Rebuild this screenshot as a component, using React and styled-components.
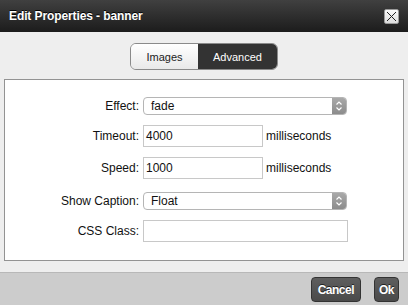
import React from "react";
import styled, { createGlobalStyle } from "styled-components";

const Global = createGlobalStyle`
  html, body { margin: 0; padding: 0; }
  body { font-family: "Liberation Sans", Arial, Helvetica, sans-serif; }
  #root { width: 408px; height: 305px; }
`;

const Dialog = styled.div`
  width: 408px;
  height: 305px;
  display: flex;
  flex-direction: column;
  background: #eeeeee;
  overflow: hidden;
`;

const TitleBar = styled.div`
  height: 32px;
  flex: none;
  display: flex;
  align-items: center;
  justify-content: space-between;
  padding: 0 9px 0 9px;
  background: linear-gradient(#404040, #1c1c1c);
  box-sizing: border-box;
`;

const Title = styled.div`
  color: #ffffff;
  font-size: 12px;
  font-weight: bold;
  letter-spacing: -0.1px;
  text-shadow: 0 -1px 0 #000;
`;

const CloseButton = styled.div`
  width: 15px;
  height: 15px;
  box-sizing: border-box;
  border: 1px solid #9a9a9a;
  border-radius: 2px;
  background: linear-gradient(#fafafa, #dcdcdc);
  display: flex;
  align-items: center;
  justify-content: center;
  margin-top: 0px;
`;

const Body = styled.div`
  flex: 1;
  display: flex;
  flex-direction: column;
  align-items: center;
  padding: 11px 4px 11px 4px;
`;

const Tabs = styled.div`
  display: flex;
  height: 27px;
  box-sizing: border-box;
  border: 1px solid #8a8a8a;
  border-radius: 6px;
  overflow: hidden;
  margin-bottom: 9px;
`;

const Tab = styled.div`
  display: flex;
  align-items: center;
  justify-content: center;
  width: ${(p) => p.$w}px;
  font-size: 11px;
  color: ${(p) => (p.$active ? "#ffffff" : "#222222")};
  background: ${(p) =>
    p.$active ? "#333333" : "linear-gradient(#ffffff, #e9e9e9)"};
`;

const Panel = styled.div`
  align-self: stretch;
  flex: 1;
  background: #ffffff;
  border: 1px solid #939393;
  display: flex;
  flex-direction: column;
  padding-top: 15px;
  box-sizing: border-box;
`;

const Row = styled.div`
  display: flex;
  align-items: center;
  height: 22px;
  margin-bottom: ${(p) => p.$mb}px;
`;

const Label = styled.div`
  width: 134px;
  text-align: right;
  margin-right: 4px;
  font-size: 12px;
  color: #111111;
`;

const SelectBox = styled.div`
  width: 204px;
  height: 18px;
  box-sizing: border-box;
  border: 1px solid #b5b5b5;
  border-radius: 4px;
  display: flex;
  align-items: center;
  overflow: hidden;
  background: #ffffff;
`;

const SelectText = styled.div`
  flex: 1;
  padding-left: 7px;
  font-size: 12px;
  color: #111;
`;

const SelectArrow = styled.div`
  width: 14px;
  height: 100%;
  background: linear-gradient(#a9a9a9, #8c8c8c);
  display: flex;
  align-items: center;
  justify-content: center;
`;

const Input = styled.div`
  width: ${(p) => p.$w}px;
  height: 22px;
  box-sizing: border-box;
  border: 1px solid #c8c8c8;
  font-size: 12px;
  color: #111;
  display: flex;
  align-items: center;
  padding-left: 2px;
`;

const Unit = styled.div`
  margin-left: 3px;
  font-size: 12px;
  color: #111;
`;

const Footer = styled.div`
  height: 33px;
  flex: none;
  background: #cccccc;
  border-top: 1px solid #b8b8b8;
  box-sizing: border-box;
  display: flex;
  justify-content: flex-end;
  align-items: flex-start;
  padding: 4px 9px 0 0;
  gap: 13px;
`;

const Button = styled.div`
  height: 25px;
  padding: 0 ${(p) => p.$px}px;
  box-sizing: border-box;
  border: 1px solid #333333;
  border-radius: 4px;
  background: linear-gradient(#5e5e5e, #4a4a4a);
  color: #ffffff;
  font-size: 12px;
  font-weight: bold;
  letter-spacing: -0.5px;
  display: flex;
  align-items: center;
  justify-content: center;
  text-shadow: 0 -1px 0 #222;
`;

const Arrows = () => (
  <svg width="8" height="12" viewBox="0 0 8 12">
    <path d="M1.5 4.5 L4 2 L6.5 4.5" fill="none" stroke="#fff" strokeWidth="1.2" />
    <path d="M1.5 7.5 L4 10 L6.5 7.5" fill="none" stroke="#fff" strokeWidth="1.2" />
  </svg>
);

const Select = ({ value }) => (
  <SelectBox>
    <SelectText>{value}</SelectText>
    <SelectArrow>
      <Arrows />
    </SelectArrow>
  </SelectBox>
);

export default function App() {
  return (
    <>
      <Global />
      <Dialog>
        <TitleBar>
          <Title>Edit Properties - banner</Title>
          <CloseButton>
            <svg width="11" height="11" viewBox="0 0 11 11">
              <path d="M1 1 L10 10 M10 1 L1 10" stroke="#222" strokeWidth="1" />
            </svg>
          </CloseButton>
        </TitleBar>
        <Body>
          <Tabs>
            <Tab $w={67}>Images</Tab>
            <Tab $w={79} $active>
              Advanced
            </Tab>
          </Tabs>
          <Panel>
            <Row $mb={8}>
              <Label>Effect:</Label>
              <Select value="fade" />
            </Row>
            <Row $mb={10}>
              <Label>Timeout:</Label>
              <Input $w={120}>4000</Input>
              <Unit>milliseconds</Unit>
            </Row>
            <Row $mb={11}>
              <Label>Speed:</Label>
              <Input $w={120}>1000</Input>
              <Unit>milliseconds</Unit>
            </Row>
            <Row $mb={8}>
              <Label>Show Caption:</Label>
              <Select value="Float" />
            </Row>
            <Row $mb={0}>
              <Label>CSS Class:</Label>
              <Input $w={205} />
            </Row>
          </Panel>
        </Body>
        <Footer>
          <Button $px={6}>Cancel</Button>
          <Button $px={4}>Ok</Button>
        </Footer>
      </Dialog>
    </>
  );
}
